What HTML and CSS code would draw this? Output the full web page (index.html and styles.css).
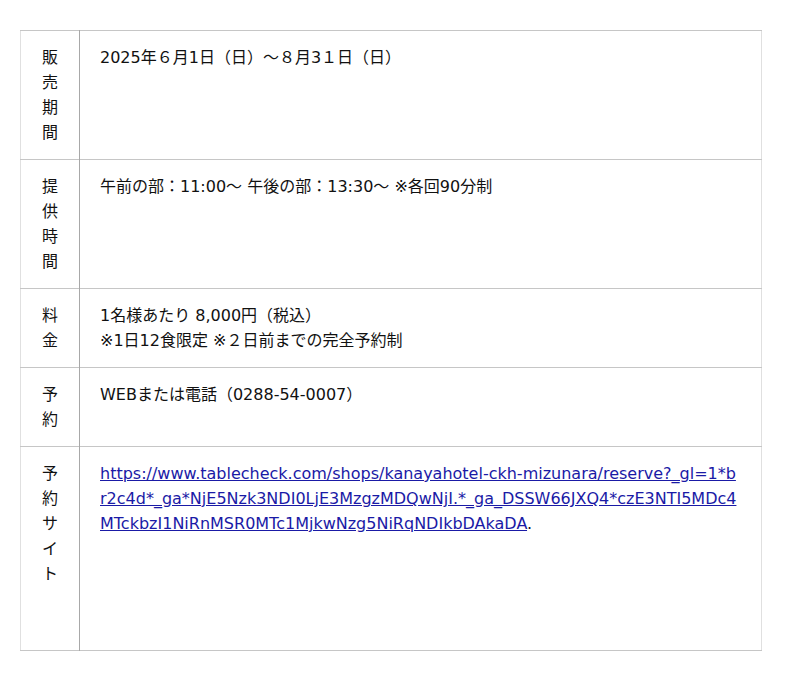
FILE: index.html
```html
<!DOCTYPE html>
<html lang="ja">
<head>
<meta charset="utf-8">
<link rel="stylesheet" href="styles.css">
</head>
<body>
<div class="page">
<table class="info">
<tbody>
<tr>
<th class="label">販売期間</th>
<td class="content">2025年６月1日（日）～８月3１日（日）</td>
</tr>
<tr>
<th class="label">提供時間</th>
<td class="content">午前の部：11:00～ 午後の部：13:30～ ※各回90分制</td>
</tr>
<tr>
<th class="label">料金</th>
<td class="content">1名様あたり 8,000円（税込）<br>※1日12食限定 ※２日前までの完全予約制</td>
</tr>
<tr>
<th class="label">予約</th>
<td class="content">WEBまたは電話（0288-54-0007）</td>
</tr>
<tr>
<th class="label">予約サイト</th>
<td class="content"><a class="link" href="#">https://www.tablecheck.com/shops/kanayahotel-ckh-mizunara/reserve?_gl=1*br2c4d*_ga*NjE5Nzk3NDI0LjE3MzgzMDQwNjI.*_ga_DSSW66JXQ4*czE3NTI5MDc4MTckbzI1NiRnMSR0MTc1MjkwNzg5NiRqNDIkbDAkaDA</a>.<br><br><br><br><br></td>
</tr>
</tbody>
</table>
</div>
</body>
</html>
```

FILE: styles.css
```css
html, body {
  margin: 0;
  padding: 0;
  background: #fff;
}
.page {
  padding: 30px 0 0 20px;
  font-family: "DejaVu Sans", "Noto Sans CJK JP", sans-serif;
  font-size: 16px;
  line-height: 25px;
  color: #111;
}
.info {
  width: 742px;
  border-collapse: collapse;
  border-left: 1px solid #e0e0e0;
  border-right: 1px solid #e0e0e0;
}
.info tr {
  border-top: 1px solid #c6c6c6;
  border-bottom: 1px solid #c6c6c6;
}
.label {
  width: 18px;
  padding: 14px 20px;
  font-weight: normal;
  text-align: center;
  vertical-align: top;
  border-right: 1px solid #a8a8a8;
  word-break: break-all;
}
.content {
  padding: 14px 20px;
  vertical-align: top;
  text-align: left;
}
.link {
  color: #1a1aa6;
  text-decoration: underline;
  word-break: break-all;
}
```
